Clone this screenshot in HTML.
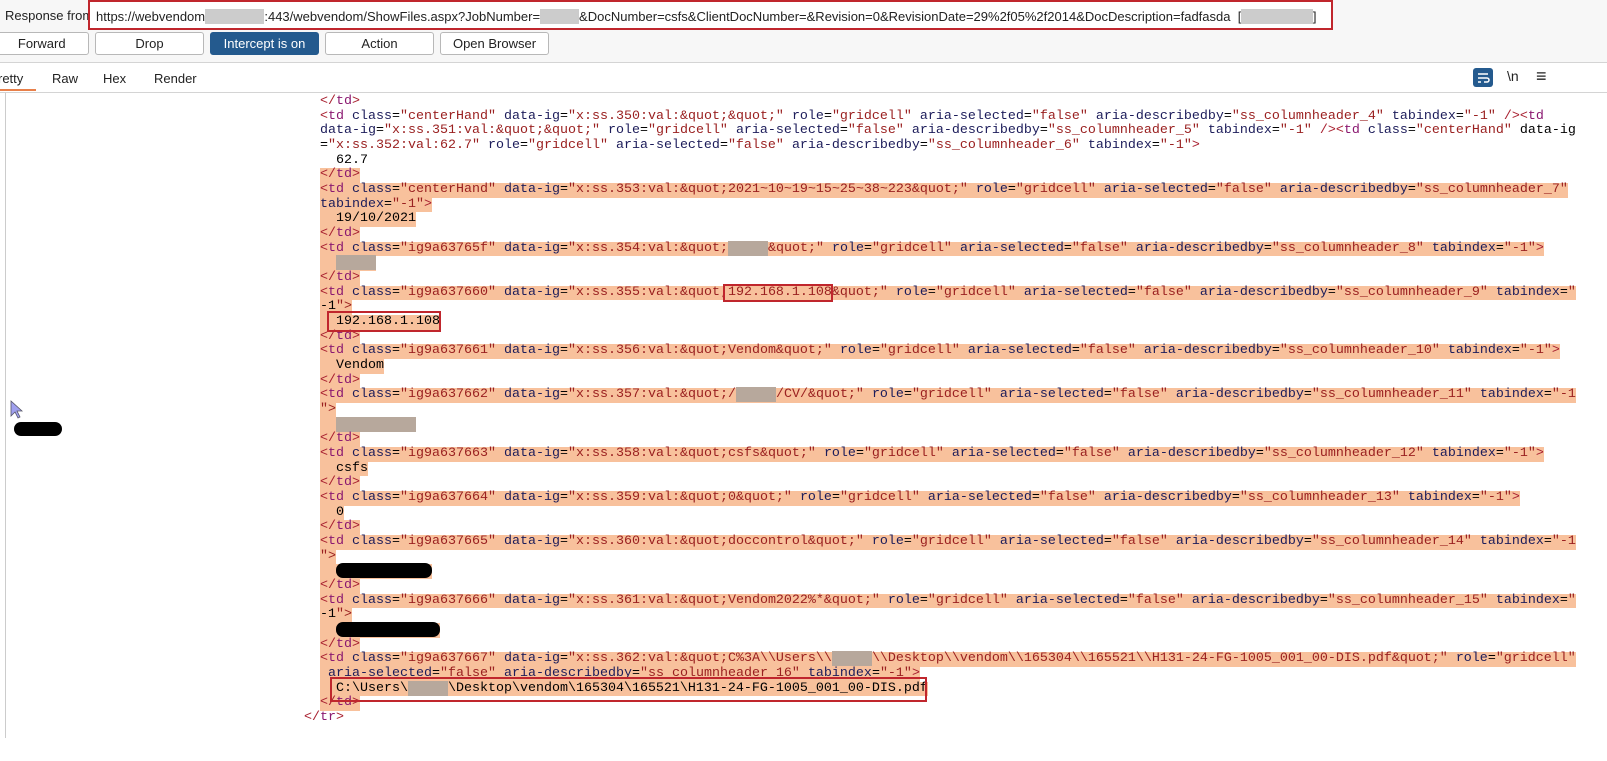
<!DOCTYPE html>
<html><head><meta charset="utf-8"><style>
body{margin:0;width:1607px;height:761px;background:#fff;position:relative;overflow:hidden;font-family:"Liberation Sans",sans-serif}
.hdr{position:absolute;left:0;top:0;width:1607px;height:62px;background:#f7f7f7;border-bottom:1px solid #d4d4d4}
.rf{position:absolute;left:5px;top:8px;font-size:13px;color:#222}
.url{position:absolute;left:88px;top:0;width:1245px;height:30px;border:2px solid #c0262d;box-sizing:border-box;font-size:13px;padding:7px 0 0 6px;color:#222;white-space:nowrap;background:#fff}
.btn{position:absolute;top:32px;height:23px;border:1px solid #b8b8b8;border-radius:3px;background:#fff;font-size:13px;text-align:center;line-height:22px;color:#222;box-sizing:border-box}
.tabs{position:absolute;top:63px;left:0;width:1607px;height:29px;border-bottom:1px solid #d4d4d4;background:#fff}
.tab{position:absolute;top:8px;font-size:13px;color:#222}
.code{position:absolute;left:0;top:93px;width:1607px;height:645px;border-left:1px solid #ccc;margin-left:5px}
.ln{position:absolute;left:320px;height:14.67px;line-height:14.67px;font-family:"Liberation Mono",monospace;font-size:13.33px;white-space:pre;color:#000}
.hl{background:#f8c19c}
.t{color:#a82030}.n{color:#8a1870}.a{color:#1c1c5a}.v{color:#9a2020}
.blur{background:#b7a89c;color:transparent}
.pill{position:absolute;background:#000;border-radius:8px}
.box{position:absolute;border:2px solid #c0262d;box-sizing:border-box}
</style></head><body>
<div class="hdr">
<div class="rf">Response from</div>
<div class="url">https://webvendom<span style="background:#ccc;color:transparent">.xxxxx.xxx</span>:443/webvendom/ShowFiles.aspx?JobNumber=<span style="background:#ccc;color:transparent">xxxxxx</span>&amp;DocNumber=csfs&amp;ClientDocNumber=&amp;Revision=0&amp;RevisionDate=29%2f05%2f2014&amp;DocDescription=fadfasda&nbsp; [<span style="background:#ccc;color:transparent">xxxxxxxxxxx</span>]</div>
<div class="btn" style="left:-20px;width:109px">&nbsp;&nbsp;&nbsp;&nbsp;Forward</div>
<div class="btn" style="left:95px;width:109px">Drop</div>
<div class="btn" style="left:210px;width:109px;background:#245a8e;border-color:#245a8e;color:#fff">Intercept is on</div>
<div class="btn" style="left:325px;width:109px">Action</div>
<div class="btn" style="left:440px;width:109px">Open Browser</div>
</div>
<div class="tabs">
<div class="tab" style="left:-2px">retty</div>
<div style="position:absolute;left:0;top:26px;width:36px;height:2px;background:#e8804a"></div>
<div class="tab" style="left:52px">Raw</div>
<div class="tab" style="left:103px">Hex</div>
<div class="tab" style="left:154px">Render</div>
<div style="position:absolute;left:1473px;top:5px;width:20px;height:19px;background:#245a8e;border-radius:3px"><svg width="20" height="19"><path d="M5 6h10M5 10h9a2 2 0 010 4h-3M5 14h3" stroke="#fff" stroke-width="1.5" fill="none"/></svg></div>
<div class="tab" style="left:1507px;top:5px;font-size:14px">\n</div>
<div class="tab" style="left:1536px;top:4px;font-size:18px;line-height:18px">≡</div>
</div>
<div class="code"></div>
<div id="c"></div>
<svg style="position:absolute;left:10px;top:400px" width="14" height="20"><path d="M1 1v15l4-4 3 6 2-1-3-6h5z" fill="#a0a0ee" stroke="#556" stroke-width="0.8"/></svg>
<div class="pill" style="left:14px;top:422px;width:48px;height:14px"></div>
<div class="box" style="left:723px;top:284px;width:110px;height:18px"></div>
<div class="box" style="left:327px;top:311px;width:114px;height:21px"></div>
<div class="box" style="left:330px;top:677px;width:597px;height:25px"></div>
<script>
var L=[
'</td>',
'<td class="centerHand" data-ig="x:ss.350:val:&quot;&quot;" role="gridcell" aria-selected="false" aria-describedby="ss_columnheader_4" tabindex="-1" /><td',
'data-ig="x:ss.351:val:&quot;&quot;" role="gridcell" aria-selected="false" aria-describedby="ss_columnheader_5" tabindex="-1" /><td class="centerHand" data-ig',
'="x:ss.352:val:62.7" role="gridcell" aria-selected="false" aria-describedby="ss_columnheader_6" tabindex="-1">',
'  62.7',
'</td>',
'<td class="centerHand" data-ig="x:ss.353:val:&quot;2021~10~19~15~25~38~223&quot;" role="gridcell" aria-selected="false" aria-describedby="ss_columnheader_7"',
'tabindex="-1">',
'  19/10/2021',
'</td>',
'<td class="ig9a63765f" data-ig="x:ss.354:val:&quot;XXXXX&quot;" role="gridcell" aria-selected="false" aria-describedby="ss_columnheader_8" tabindex="-1">',
'  XXXXX',
'</td>',
'<td class="ig9a637660" data-ig="x:ss.355:val:&quot;192.168.1.108&quot;" role="gridcell" aria-selected="false" aria-describedby="ss_columnheader_9" tabindex="',
'-1">',
'  192.168.1.108',
'</td>',
'<td class="ig9a637661" data-ig="x:ss.356:val:&quot;Vendom&quot;" role="gridcell" aria-selected="false" aria-describedby="ss_columnheader_10" tabindex="-1">',
'  Vendom',
'</td>',
'<td class="ig9a637662" data-ig="x:ss.357:val:&quot;/XXXXX/CV/&quot;" role="gridcell" aria-selected="false" aria-describedby="ss_columnheader_11" tabindex="-1',
'">',
'  XXXXXXXXXX',
'</td>',
'<td class="ig9a637663" data-ig="x:ss.358:val:&quot;csfs&quot;" role="gridcell" aria-selected="false" aria-describedby="ss_columnheader_12" tabindex="-1">',
'  csfs',
'</td>',
'<td class="ig9a637664" data-ig="x:ss.359:val:&quot;0&quot;" role="gridcell" aria-selected="false" aria-describedby="ss_columnheader_13" tabindex="-1">',
'  0',
'</td>',
'<td class="ig9a637665" data-ig="x:ss.360:val:&quot;doccontrol&quot;" role="gridcell" aria-selected="false" aria-describedby="ss_columnheader_14" tabindex="-1',
'">',
'  PPPPPPPPPPPP',
'</td>',
'<td class="ig9a637666" data-ig="x:ss.361:val:&quot;Vendom2022%*&quot;" role="gridcell" aria-selected="false" aria-describedby="ss_columnheader_15" tabindex="',
'-1">',
'  PPPPPPPPPPPPP',
'</td>',
'<td class="ig9a637667" data-ig="x:ss.362:val:&quot;C%3A\\\\Users\\\\XXXXX\\\\Desktop\\\\vendom\\\\165304\\\\165521\\\\H131-24-FG-1005_001_00-DIS.pdf&quot;" role="gridcell"',
' aria-selected="false" aria-describedby="ss_columnheader_16" tabindex="-1">',
'  C:\\Users\\XXXXX\\Desktop\\vendom\\165304\\165521\\H131-24-FG-1005_001_00-DIS.pdf',
'</td>'
];
function esc(s){return s.replace(/&/g,'&amp;').replace(/</g,'&lt;').replace(/>/g,'&gt;');}
function col(s){
 var re=/("[^"]*"?)|(<\/?)([a-z]+)|(\/?>)|([a-z-]+)(?==)/g,out='',last=0,m;
 while((m=re.exec(s))){out+=esc(s.slice(last,m.index));
  if(m[1])out+='<span class="v">'+esc(m[1])+'</span>';
  else if(m[2])out+='<span class="t">'+esc(m[2])+'</span><span class="n">'+m[3]+'</span>';
  else if(m[4])out+='<span class="t">'+esc(m[4])+'</span>';
  else out+='<span class="a">'+m[5]+'</span>';
  last=re.lastIndex;}
 out+=esc(s.slice(last));
 out=out.replace(/X{3,}/g,function(x){return '<span class="blur">'+x+'</span>';});
 out=out.replace(/P{3,}/g,function(x){return '<span style="background:#000;color:transparent;border-radius:7px">'+x+'</span>';});
 return out;}
var h='';
for(var i=0;i<L.length;i++){h+='<div class="ln'+(i>=5?' hl':'')+'" style="top:'+(95+i*14.67).toFixed(2)+'px">'+col(L[i])+'</div>';}
h+='<div class="ln" style="left:304px;top:'+(95+42*14.67).toFixed(2)+'px">'+col('</tr>')+'</div>';
document.getElementById('c').innerHTML=h;
</script>
</body></html>
